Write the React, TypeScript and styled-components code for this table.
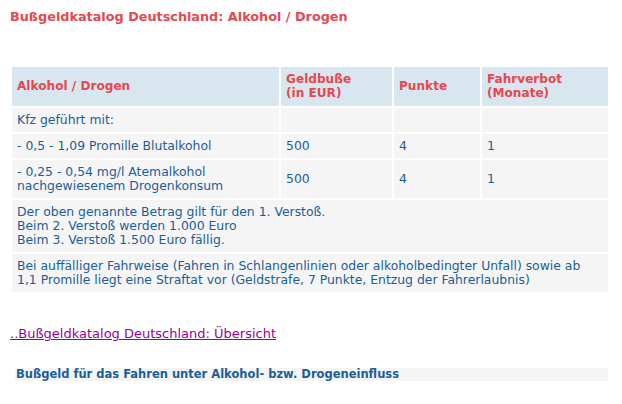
import React from 'react'
import styled, { createGlobalStyle } from 'styled-components'

const GlobalStyle = createGlobalStyle`
  body {
    margin: 0;
    background: #fff;
    font-family: 'DejaVu Sans', Verdana, sans-serif;
  }
`

const Page = styled.div`
  padding: 9px 10px 0 10px;
  width: 600px;
`

const Title = styled.h1`
  margin: 0 0 40px 0;
  font-size: 12.8px;
  line-height: 16px;
  font-weight: bold;
  color: #e8474f;
`

const Table = styled.table`
  width: 600px;
  border-spacing: 2px;
  font-size: 12.4px;
  color: #1a5e9a;
`

const HeadCell = styled.th<{ $w?: number }>`
  width: ${p => (p.$w ? `${p.$w}px` : 'auto')};
  padding: 5px 5px 6px 5px;
  background: #d7e6ef;
  color: #e8474f;
  text-align: left;
  font-size: 12.1px;
  font-weight: bold;
  line-height: 14px;
`

const Cell = styled.td`
  padding: 5px 5px;
  background: #f5f5f5;
  vertical-align: middle;
  line-height: 14px;
  height: 14px;
`

const Link = styled.a`
  display: inline-block;
  margin-top: 32px;
  font-size: 13px;
  line-height: 16px;
  color: #990099;
  text-decoration: underline;
`

const SubHeading = styled.h2`
  margin: 26px 0 0 5px;
  padding: 0 1px;
  width: 591px;
  background: #f5f5f5;
  font-size: 11.5px;
  line-height: 13px;
  font-weight: bold;
  color: #1a5e9a;
`

const rows = [
  { label: ['Kfz geführt mit:'], fine: '', points: '', ban: '' },
  { label: ['- 0,5 - 1,09 Promille Blutalkohol'], fine: '500', points: '4', ban: '1' },
  {
    label: ['- 0,25 - 0,54 mg/l Atemalkohol', 'nachgewiesenem Drogenkonsum'],
    fine: '500',
    points: '4',
    ban: '1',
  },
]

const App: React.FC = () => {
  return (
    <Page>
      <GlobalStyle />
      <Title>Bußgeldkatalog Deutschland: Alkohol / Drogen</Title>
      <Table>
        <thead>
          <tr>
            <HeadCell $w={257}>Alkohol / Drogen</HeadCell>
            <HeadCell $w={101}>
              Geldbuße
              <br />
              (in EUR)
            </HeadCell>
            <HeadCell $w={76}>Punkte</HeadCell>
            <HeadCell>
              Fahrverbot
              <br />
              (Monate)
            </HeadCell>
          </tr>
        </thead>
        <tbody>
          {rows.map((r, i) => (
            <tr key={i}>
              <Cell>
                {r.label.map((l, j) => (
                  <React.Fragment key={j}>
                    {j > 0 && <br />}
                    {l}
                  </React.Fragment>
                ))}
              </Cell>
              <Cell>{r.fine}</Cell>
              <Cell>{r.points}</Cell>
              <Cell>{r.ban}</Cell>
            </tr>
          ))}
          <tr>
            <Cell colSpan={4}>
              Der oben genannte Betrag gilt für den 1. Verstoß.
              <br />
              Beim 2. Verstoß werden 1.000 Euro
              <br />
              Beim 3. Verstoß 1.500 Euro fällig.
            </Cell>
          </tr>
          <tr>
            <Cell colSpan={4}>
              Bei auffälliger Fahrweise (Fahren in Schlangenlinien oder alkoholbedingter Unfall) sowie ab
              <br />
              1,1 Promille liegt eine Straftat vor (Geldstrafe, 7 Punkte, Entzug der Fahrerlaubnis)
            </Cell>
          </tr>
        </tbody>
      </Table>
      <Link href="#">..Bußgeldkatalog Deutschland: Übersicht</Link>
      <SubHeading>Bußgeld für das Fahren unter Alkohol- bzw. Drogeneinfluss</SubHeading>
    </Page>
  )
}

export default App
